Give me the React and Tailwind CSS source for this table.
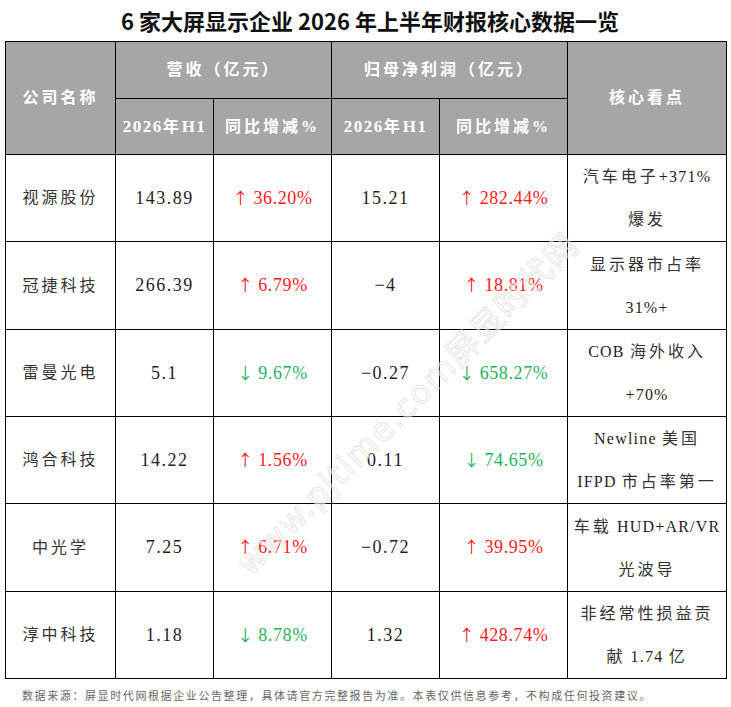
const rows = [
  { name: "视源股份", rev: "143.89", revChg: "36.20%", revUp: true, np: "15.21", npChg: "282.44%", npUp: true, note: ["汽车电子+371%", "爆发"], h: "h-[87px]" },
  { name: "冠捷科技", rev: "266.39", revChg: "6.79%", revUp: true, np: "−4", npChg: "18.81%", npUp: true, note: ["显示器市占率", "31%+"], h: "h-[88px]" },
  { name: "雷曼光电", rev: "5.1", revChg: "9.67%", revUp: false, np: "−0.27", npChg: "658.27%", npUp: false, note: ["COB 海外收入", "+70%"], h: "h-[87px]" },
  { name: "鸿合科技", rev: "14.22", revChg: "1.56%", revUp: true, np: "0.11", npChg: "74.65%", npUp: false, note: ["Newline 美国", "IFPD 市占率第一"], h: "h-[87px]" },
  { name: "中光学", rev: "7.25", revChg: "6.71%", revUp: true, np: "−0.72", npChg: "39.95%", npUp: true, note: ["车载 HUD+AR/VR", "光波导"], h: "h-[88px]" },
  { name: "淳中科技", rev: "1.18", revChg: "8.78%", revUp: false, np: "1.32", npChg: "428.74%", npUp: true, note: ["非经常性损益贡", "献 1.74 亿"], h: "h-[87px]" },
];

const serif = "font-['Liberation_Serif','Noto_Sans_CJK_SC',serif]";

// split a line into CJK and latin runs so each gets its own size and spacing
function Mixed({ text, latin }) {
  const parts = text.match(/[\u3000-\u303f\u4e00-\u9fff\uff00-\uffef]+|[^\u3000-\u303f\u4e00-\u9fff\uff00-\uffef]+/g) || [];
  return parts.map((p, i) =>
    /[\u4e00-\u9fff\uff00-\uffef]/.test(p) ? (
      <span key={i} className="text-[16px] tracking-[3px]">{p}</span>
    ) : (
      <span key={i} className={latin}>{p}</span>
    )
  );
}

function Num({ children }) {
  return <span className="text-[18px] tracking-[1.5px]">{children}</span>;
}

function Change({ value, up }) {
  return (
    <span className={up ? "text-[#ff1a1a]" : "text-[#1fb25a]"}>
      <span className="font-['Noto_Sans_CJK_SC',sans-serif] text-[16px] tracking-[0px] mr-[5px]">{up ? "↑" : "↓"}</span>
      <span className="text-[18px] tracking-[0.6px]">{value}</span>
    </span>
  );
}

export default function App() {
  const th = "border border-black bg-[#a6a6a6] text-white font-bold text-[16px] tracking-[3px] text-center align-middle p-0";
  const td = "border border-black text-center align-middle p-0 text-[16px] tracking-[3px] text-[#1e1e1e]";

  return (
    <div className={`relative w-[731px] h-[707px] bg-white overflow-hidden ${serif}`}>
      <h1 className="h-[41px] flex items-center justify-center pl-[9px] text-[22px] font-bold text-[#111] font-['Noto_Sans_CJK_SC',sans-serif]">
        6 家大屏显示企业 2026 年上半年财报核心数据一览
      </h1>

      <table className="ml-[5px] w-[721px] table-fixed border-collapse">
        <colgroup>
          <col className="w-[110px]" />
          <col className="w-[98px]" />
          <col className="w-[118px]" />
          <col className="w-[108px]" />
          <col className="w-[128px]" />
          <col className="w-[159px]" />
        </colgroup>
        <thead>
          <tr className="h-[57px]">
            <th rowSpan={2} className={th}>公司名称</th>
            <th colSpan={2} className={th}>营收（亿元）</th>
            <th colSpan={2} className={th}>归母净利润（亿元）</th>
            <th rowSpan={2} className={th}>核心看点</th>
          </tr>
          <tr className="h-[56px]">
            <th className={th}>
              <Mixed text="2026年H1" latin="text-[17px] tracking-[1.5px]" />
            </th>
            <th className={th}>同比增减%</th>
            <th className={th}>
              <Mixed text="2026年H1" latin="text-[17px] tracking-[1.5px]" />
            </th>
            <th className={th}>同比增减%</th>
          </tr>
        </thead>
        <tbody>
          {rows.map((r) => (
            <tr key={r.name} className={r.h}>
              <td className={`${td} text-[#333]`}>{r.name}</td>
              <td className={td}>
                <Num>{r.rev}</Num>
              </td>
              <td className={td}>
                <Change value={r.revChg} up={r.revUp} />
              </td>
              <td className={td}>
                <Num>{r.np}</Num>
              </td>
              <td className={td}>
                <Change value={r.npChg} up={r.npUp} />
              </td>
              <td className={`${td} leading-[43px] text-[#333]`}>
                {r.note.map((line) => (
                  <div key={line} className="whitespace-nowrap">
                    <Mixed text={line} latin="text-[16px] tracking-[1.2px] text-[#1e1e1e]" />
                  </div>
                ))}
              </td>
            </tr>
          ))}
        </tbody>
      </table>

      <p className="pl-[22px] pt-[9px] text-[11px] tracking-[1.6px] text-[#666] whitespace-nowrap">
        数据来源：屏显时代网根据企业公告整理，具体请官方完整报告为准。本表仅供信息参考，不构成任何投资建议。
      </p>

      <div className="pointer-events-none absolute left-[408px] top-[404px] -translate-x-1/2 -translate-y-1/2 -rotate-45 whitespace-nowrap text-[33px] tracking-[1.5px] text-[#fcfcfc] opacity-60 [-webkit-text-stroke:0.8px_#cfcfcf] font-['DejaVu_Sans','Noto_Sans_CJK_SC',sans-serif]">
        www.pjtime.com屏显时代网
      </div>
    </div>
  );
}
